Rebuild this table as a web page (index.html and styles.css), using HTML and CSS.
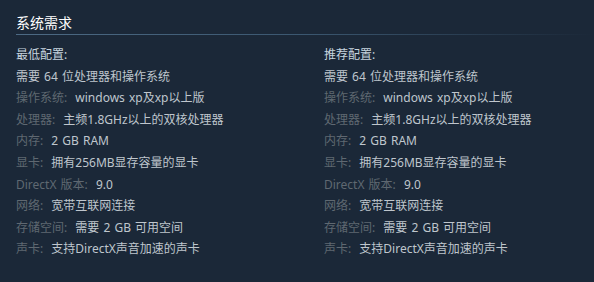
FILE: index.html
```html
<!DOCTYPE html>
<html lang="zh-CN">
<head>
<meta charset="utf-8">
<link rel="stylesheet" href="styles.css">
</head>
<body>
<div class="sysreq">
  <h2 class="title">系统需求</h2>
  <div class="cols">
    <ul class="col">
      <li class="head">最低配置:</li>
      <li>需要 64 位处理器和操作系统</li>
      <li><span class="k">操作系统:</span> windows xp及xp以上版</li>
      <li><span class="k">处理器:</span> 主频1.8GHz以上的双核处理器</li>
      <li><span class="k">内存:</span> 2 GB RAM</li>
      <li><span class="k">显卡:</span> 拥有256MB显存容量的显卡</li>
      <li><span class="k">DirectX 版本:</span> 9.0</li>
      <li><span class="k">网络:</span> 宽带互联网连接</li>
      <li><span class="k">存储空间:</span> 需要 2 GB 可用空间</li>
      <li><span class="k">声卡:</span> 支持DirectX声音加速的声卡</li>
    </ul>
    <ul class="col">
      <li class="head">推荐配置:</li>
      <li>需要 64 位处理器和操作系统</li>
      <li><span class="k">操作系统:</span> windows xp及xp以上版</li>
      <li><span class="k">处理器:</span> 主频1.8GHz以上的双核处理器</li>
      <li><span class="k">内存:</span> 2 GB RAM</li>
      <li><span class="k">显卡:</span> 拥有256MB显存容量的显卡</li>
      <li><span class="k">DirectX 版本:</span> 9.0</li>
      <li><span class="k">网络:</span> 宽带互联网连接</li>
      <li><span class="k">存储空间:</span> 需要 2 GB 可用空间</li>
      <li><span class="k">声卡:</span> 支持DirectX声音加速的声卡</li>
    </ul>
  </div>
</div>
</body>
</html>
```

FILE: styles.css
```css
html, body {
  margin: 0;
  padding: 0;
  background: #1b2838;
  height: 100%;
}
body {
  font-family: "Noto Sans", "Noto Sans CJK SC", sans-serif;
  font-size: 12px;
  color: #bfc6cd;
}
.sysreq {
  padding: 13px 0 0 16px;
}
.title {
  margin: 0;
  font-size: 14px;
  font-weight: normal;
  line-height: 20px;
  color: #ffffff;
}
.title::after {
  content: "";
  display: block;
  height: 1px;
  margin-top: 1px;
  background: linear-gradient(to right, #4d6a84 0%, #3b5770 50%, rgba(59, 87, 112, 0) 100%);
}
.cols {
  display: grid;
  grid-template-columns: 308px 1fr;
  margin-top: 9px;
}
.col {
  list-style: none;
  margin: 0;
  padding: 0;
}
.col li {
  line-height: 21.6px;
  white-space: nowrap;
  word-spacing: 1px;
}
.col .head {
  color: #c6d4df;
}
.k {
  color: #5f6871;
  margin-right: 4px;
}
```
